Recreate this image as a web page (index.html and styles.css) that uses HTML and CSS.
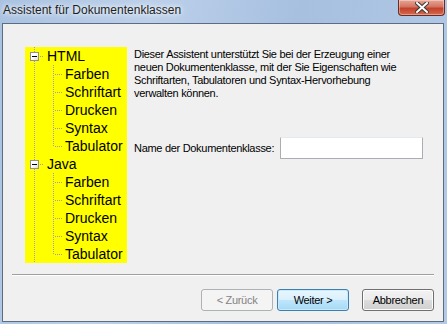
FILE: index.html
```html
<!DOCTYPE html>
<html lang="de">

<head>
    <meta charset="UTF-8">
    <title>Assistent für Dokumentenklassen</title>
    <link rel="stylesheet" href="styles.css">
</head>

<body>
    <div class="window">
        <div class="titlebar">
            <span class="title">Assistent für Dokumentenklassen</span>
            <div class="closeBtn">
                <svg width="14" height="11" viewBox="0 0 14 11">
                    <path d="M2 1 L12 10 M12 1 L2 10" stroke="#3b3b3b" stroke-width="4" stroke-linecap="square" />
                    <path d="M2 1 L12 10 M12 1 L2 10" stroke="#ffffff" stroke-width="2" stroke-linecap="square" />
                </svg>
            </div>
        </div>
        <div class="client">
            <div class="main">
                <!-- Baum mit den Dokumentenklassen -->
                <div class="tree">
                    <div class="node"><span class="exp"></span><span class="hline"></span><span>HTML</span></div>
                    <div class="kids">
                        <div class="leaf">Farben</div>
                        <div class="leaf">Schriftart</div>
                        <div class="leaf">Drucken</div>
                        <div class="leaf">Syntax</div>
                        <div class="leaf">Tabulator</div>
                    </div>
                    <div class="node"><span class="exp"></span><span class="hline"></span><span>Java</span></div>
                    <div class="kids">
                        <div class="leaf">Farben</div>
                        <div class="leaf">Schriftart</div>
                        <div class="leaf">Drucken</div>
                        <div class="leaf">Syntax</div>
                        <div class="leaf">Tabulator</div>
                    </div>
                </div>
                <div class="info">
                    <p class="desc">Dieser Assistent unterstützt Sie bei der Erzeugung einer<br>neuen Dokumentenklasse, mit der Sie Eigenschaften wie<br>Schriftarten, Tabulatoren und Syntax-Hervorhebung<br>verwalten können.</p>
                    <div class="field">
                        <label for="name">Name der Dokumentenklasse:</label>
                        <input id="name" type="text">
                    </div>
                </div>
            </div>
            <div class="sep"></div>
            <div class="buttons">
                <button class="btn disabled">&lt; Zurück</button>
                <button class="btn default">Weiter &gt;</button>
                <button class="btn cancel">Abbrechen</button>
            </div>
        </div>
    </div>
</body>

</html>
```

FILE: styles.css
```css
* {
    padding: 0px;
    margin: 0px;
    box-sizing: border-box;
}

body {
    width: 447px;
    height: 324px;
    overflow: hidden;
    background: linear-gradient(100deg, #a9c2e2 0%, #bcd0ea 30%, #a7c0e0 60%, #b3c9e6 100%);
    font-family: "Liberation Sans", Arial, sans-serif;
}

.window {
    padding: 0px 3px 2px 2px;
}

.titlebar {
    height: 23px;
    display: flex;
    align-items: flex-start;
}

.title {
    flex: 1;
    padding: 3px 0px 0px 1px;
    font-size: 12px;
    color: #1e1e1e;
    text-shadow: 0px 0px 8px #ffffff, 0px 0px 4px #ffffff;
}

.closeBtn {
    width: 47px;
    height: 16px;
    margin-right: -1px;
    margin-left: -4px;
    border: 1px solid #6d2a22;
    border-top: none;
    border-radius: 0px 0px 4px 4px;
    background: linear-gradient(to bottom, #e8a597 0%, #d47462 45%, #c2412a 55%, #d46b4f 100%);
    box-shadow: inset 0px 0px 0px 1px rgba(255, 255, 255, 0.35);
    display: flex;
    align-items: center;
    justify-content: center;
}

.client {
    height: 299px;
    border: 1px solid #5d6d80;
    background-color: #f0f0f0;
    font-size: 11px;
    letter-spacing: -0.3px;
    color: #000;
}

.main {
    display: flex;
    padding: 23px 0px 0px 22px;
}

/* Baum */
.tree {
    width: 102px;
    background-color: #ffff00;
    background-image: repeating-linear-gradient(to bottom, #a0a0a0 0px, #a0a0a0 1px, transparent 1px, transparent 2px);
    background-size: 1px 100%;
    background-position: 9px 0px;
    background-repeat: no-repeat;
    font-size: 14px;
    letter-spacing: 0px;
}

.node,
.leaf {
    height: 18px;
    display: flex;
    align-items: center;
    white-space: nowrap;
}

.node {
    padding-left: 5px;
}

.exp {
    width: 9px;
    height: 9px;
    border: 1px solid #919191;
    background: linear-gradient(135deg, #ffffff 40%, #dcdcdc 100%);
    display: flex;
    align-items: center;
    justify-content: center;
}

.exp::after {
    content: "";
    width: 5px;
    height: 1px;
    background-color: #000;
}

.hline {
    width: 5px;
    height: 1px;
    margin-right: 3px;
    background: repeating-linear-gradient(to right, transparent 0px, transparent 1px, #a0a0a0 1px, #a0a0a0 2px);
}

.kids {
    background-image: repeating-linear-gradient(to bottom, #a0a0a0 0px, #a0a0a0 1px, transparent 1px, transparent 2px);
    background-size: 1px calc(100% - 9px);
    background-position: 28px 0px;
    background-repeat: no-repeat;
}

.leaf {
    padding-left: 29px;
}

.leaf::before {
    content: "";
    width: 8px;
    height: 1px;
    margin-right: 3px;
    background: repeating-linear-gradient(to right, transparent 0px, transparent 1px, #a0a0a0 1px, #a0a0a0 2px);
}

/* rechte Seite */
.info {
    margin-left: 7px;
    padding-top: 1px;
}

.desc {
    line-height: 13px;
}

.field {
    display: flex;
    align-items: center;
    margin-top: 37px;
}

.field input {
    width: 143px;
    height: 22px;
    margin-left: 6px;
    border: 1px solid #abadb3;
    border-top-color: #e3e9ef;
    border-radius: 1px;
    background-color: #fff;
    outline: none;
}

.sep {
    margin: 11px 9px 0px 9px;
    border-top: 1px solid #a0a0a0;
    border-bottom: 1px solid #ffffff;
}

.buttons {
    display: flex;
    justify-content: flex-end;
    padding: 13px 9px 0px 0px;
}

.btn {
    width: 72px;
    height: 22px;
    margin-left: 4px;
    border: 1px solid #707070;
    border-radius: 3px;
    background: linear-gradient(to bottom, #f2f2f2 0%, #ebebeb 50%, #dddddd 50%, #cfcfcf 100%);
    box-shadow: inset 0px 0px 0px 1px #fcfcfc;
    font-family: "Liberation Sans", Arial, sans-serif;
    font-size: 11px;
    letter-spacing: -0.3px;
    color: #000;
}

.btn.disabled {
    border-color: #adb2b5;
    background: #f4f4f4;
    box-shadow: none;
    color: #838383;
}

.btn.default {
    border-color: #3c7fb1;
    background: linear-gradient(to bottom, #eaf6fd 0%, #d9f0fc 50%, #bee6fd 50%, #a7d9f5 100%);
    box-shadow: inset 0px 0px 0px 1px #c4eafc;
}

.btn.cancel {
    margin-left: 13px;
}
```
